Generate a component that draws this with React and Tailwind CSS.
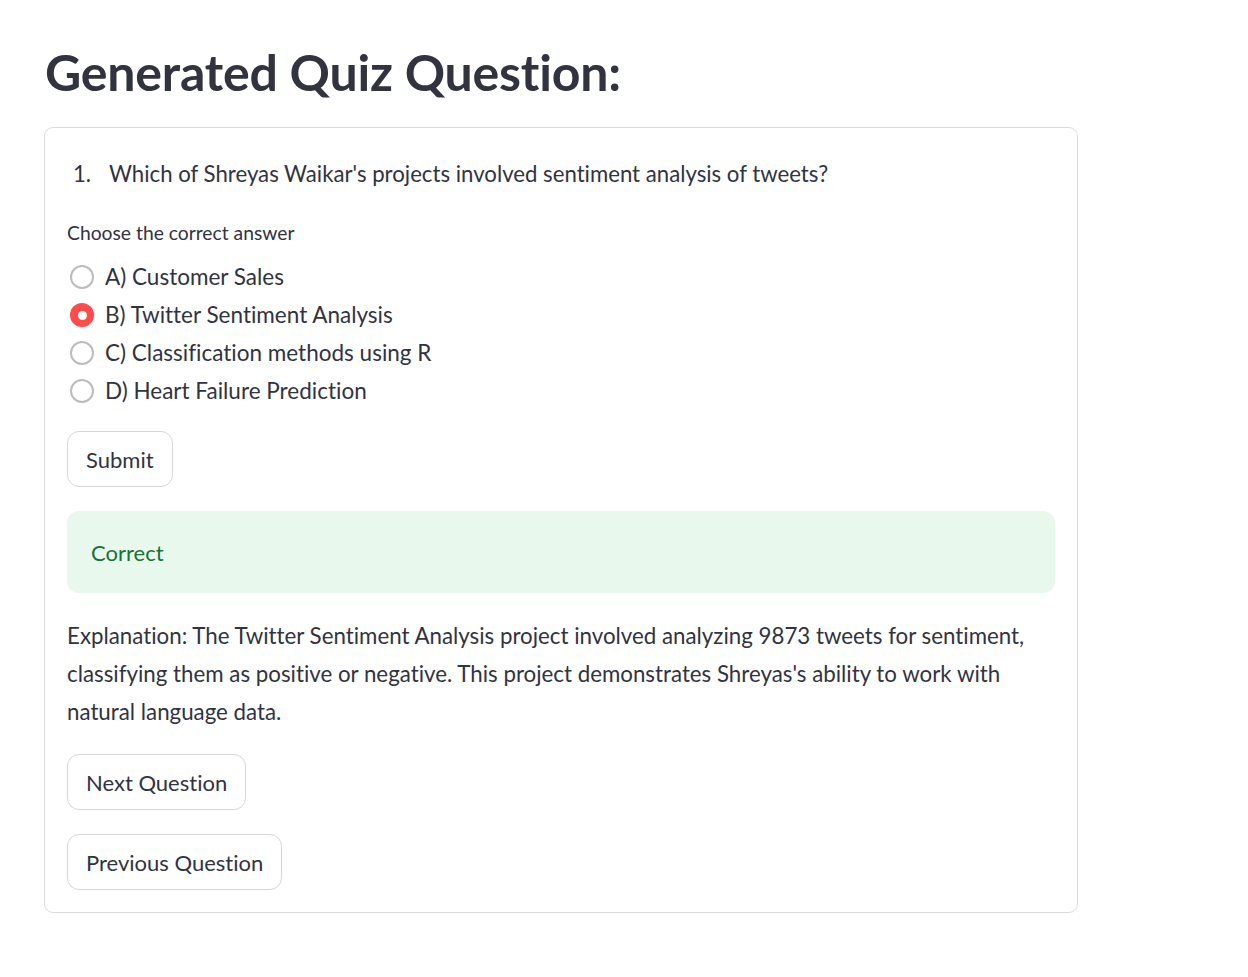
import React, { useState } from "react";

const OPTIONS = [
  "A) Customer Sales",
  "B) Twitter Sentiment Analysis",
  "C) Classification methods using R",
  "D) Heart Failure Prediction",
];

function Radio({ label, checked, onClick }) {
  return (
    <label onClick={onClick} className="flex h-[38px] cursor-pointer items-center gap-[11px] pl-[3px]">
      {checked ? (
        <span className="flex h-[24px] w-[24px] items-center justify-center rounded-full bg-[#ff4b4b]">
          <span className="h-[9px] w-[9px] rounded-full bg-white" />
        </span>
      ) : (
        <span className="h-[24px] w-[24px] rounded-full border-2 border-[#bcbcbf] bg-white" />
      )}
      <span className="text-[22.5px] leading-[38px]">{label}</span>
    </label>
  );
}

function Btn({ children, className = "" }) {
  return (
    <button
      className={`flex h-[56px] items-center rounded-[12px] border border-[#d6d6d9] bg-white px-[18px] text-[22px] text-[#31333f] ${className}`}
    >
      {children}
    </button>
  );
}

export default function App() {
  const [picked, setPicked] = useState(1);

  return (
    <div
      className="min-h-screen bg-white pl-[44px] pt-[40px] text-[#31333f] [font-variant-ligatures:none]"
      style={{ fontFamily: "Lato, 'Liberation Sans', sans-serif" }}
    >
      <h1 className="h-[64px] pl-[1px] text-[50px] font-bold leading-[64px] tracking-[-0.2px]">
        Generated Quiz Question:
      </h1>

      <div className="mt-[23px] w-[1034px] rounded-[9px] border border-[#dcdcdf] px-[22px] pb-[22px] pt-[27px]">
        {/* question */}
        <div className="flex pl-[6px] text-[22.2px] leading-[38px]">
          <span className="w-[36px]">1.</span>
          <span>Which of Shreyas Waikar's projects involved sentiment analysis of tweets?</span>
        </div>

        <div className="mt-[24px] text-[19.3px] leading-[32px]">Choose the correct answer</div>

        <div className="mt-[9px] flex flex-col">
          {OPTIONS.map((o, i) => (
            <Radio key={o} label={o} checked={picked === i} onClick={() => setPicked(i)} />
          ))}
        </div>

        <Btn className="mt-[21px]">Submit</Btn>

        <div className="mt-[24px] flex h-[82px] items-center rounded-[12px] bg-[#e8f8ed] px-[24px] text-[22px] text-[#177233]">
          Correct
        </div>

        <p className="mt-[24px] text-[22.3px] leading-[38px]">
          Explanation: The Twitter Sentiment Analysis project involved analyzing 9873 tweets for sentiment,
          classifying them as positive or negative. This project demonstrates Shreyas's ability to work with
          natural language data.
        </p>

        <Btn className="mt-[23px]">Next Question</Btn>
        <Btn className="mt-[24px]">Previous Question</Btn>
      </div>
    </div>
  );
}
